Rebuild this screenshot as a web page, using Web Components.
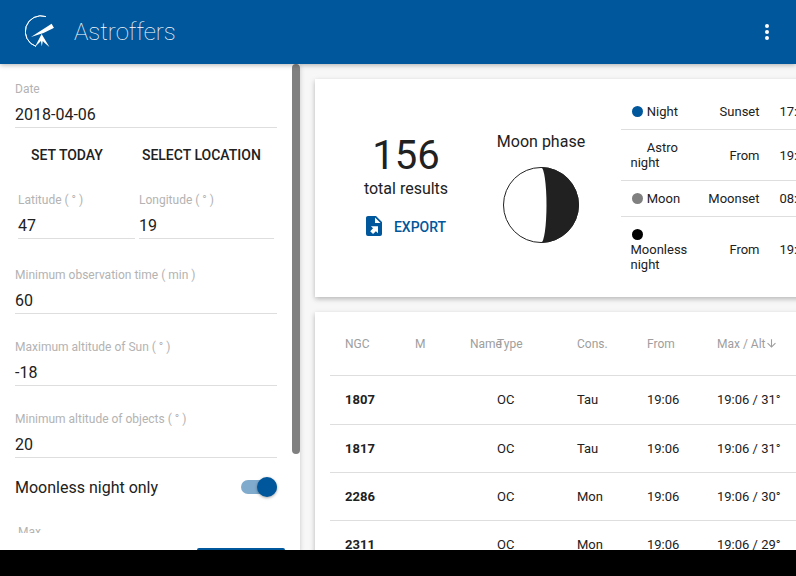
<!DOCTYPE html>
<html lang="en">
<head>
<meta charset="utf-8">
<title>Astroffers</title>
<style>
  html, body { margin: 0; height: 576px; overflow: hidden; background: #000; }
  body { font-family: Roboto, "Liberation Sans", sans-serif; font-size: 16px; color: #212121; }
</style>
</head>
<body>
<astro-app></astro-app>
<script>
const define = (name, html, init) => {
  const template = document.createElement('template');
  template.innerHTML = html;
  customElements.define(name, class extends HTMLElement {
    constructor() {
      super();
      this.attachShadow({ mode: 'open' }).appendChild(template.content.cloneNode(true));
    }
    connectedCallback() { if (init) init(this, this.shadowRoot); }
  });
};

define('astro-header', `
<style>
  :host { display: flex; align-items: center; height: 64px; flex: none; box-sizing: border-box; padding: 0 17px 0 25px;
    background: #01579b; color: #fff; box-shadow: 0 1px 5px rgba(0,0,0,.3); z-index: 2; position: relative; }
  h1 { flex: 1; margin: 0 0 0 17px; font-weight: 100; font-size: 24px; line-height: 32px; }
  svg { display: block; fill: currentColor; }
</style>
<svg width="32" height="34" viewBox="0 0 32 34">
  <path d="M21 1.6A15.6 15.6 0 0 0 11 31.4A15.2 15.2 0 0 1 21 1.6Z" stroke="#fff" stroke-width=".9"/>
  <path d="M6 22L26.6 8.8L28.6 12.3L28.2 13.2L18.5 18Z"/>
  <path d="M16.6 19L24.4 32L19.2 27.6L17.8 26L16.8 31.2L15.9 26L14.5 27.6L9.9 32Z"/>
</svg>
<h1><slot></slot></h1>
<svg width="24" height="24" viewBox="0 0 24 24"><path d="M12 8a2 2 0 1 0 0-4 2 2 0 0 0 0 4zm0 2a2 2 0 1 0 0 4 2 2 0 0 0 0-4zm0 6a2 2 0 1 0 0 4 2 2 0 0 0 0-4z"/></svg>
`);

define('astro-field', `
<style>
  :host { display: block; flex: none; }
  .label { font-size: 12px; line-height: 16px; color: #b3b3b3; white-space: nowrap; }
  .value { margin-top: 6px; line-height: 24px; border-bottom: 1px solid #dedede; }
</style>
<div class="label"></div><div class="value"><slot></slot></div>
`, (host, root) => { root.querySelector('.label').textContent = host.getAttribute('label'); });

define('astro-button', `
<style>
  :host { display: flex; align-items: center; font-size: 14px; font-weight: 500; line-height: 36px; white-space: nowrap; }
</style>
<slot></slot>
`);

define('astro-switch', `
<style>
  :host { display: flex; align-items: center; justify-content: space-between; height: 24px; line-height: 24px; }
  .text { padding-top: 2px; }
  .track { display: flex; align-items: center; justify-content: flex-end; width: 36px; height: 14px; border-radius: 7px; background: #80abcd; }
  .knob { width: 20px; height: 20px; border-radius: 50%; background: #01579b; box-shadow: 0 1px 3px rgba(0,0,0,.35); }
</style>
<div class="text"><slot></slot></div><div class="track"><div class="knob"></div></div>
`);

define('astro-sidebar', `
<style>
  :host { display: flex; flex-direction: column; width: 300px; height: 486px; flex: none; background: #fff; box-shadow: 0 2px 5px rgba(0,0,0,.2); z-index: 1; }
  .main { display: flex; flex: 1; min-height: 0; }
  .scroll { display: flex; flex-direction: column; width: 262px; height: 469px; padding: 0 15px; overflow: hidden; }
  .bar { width: 8px; height: 390px; border-radius: 4px; background: #808080; }
  .buttons { display: flex; gap: 39px; height: 36px; margin: 9px 0 19px 16px; }
  .pair { display: flex; gap: 4px; margin: 0 3px 28px; }
  .pair astro-field:first-child { width: 117px; }
  .pair astro-field:last-child { width: 135px; }
  .gap { margin-bottom: 25px; }
  astro-switch { margin-top: 17px; flex: none; }
  .cut { margin: 25px 3px 0; }
  .footer { display: flex; justify-content: flex-end; height: 2px; padding-right: 15px; overflow: hidden; }
  .footer div { width: 88px; height: 36px; border-radius: 2px; background: #01579b; }
</style>
<div class="main">
  <div class="scroll">
    <astro-field label="Date" style="margin-top:17px">2018-04-06</astro-field>
    <div class="buttons"><astro-button>SET TODAY</astro-button><astro-button>SELECT LOCATION</astro-button></div>
    <div class="pair"><astro-field label="Latitude ( ° )">47</astro-field><astro-field label="Longitude ( ° )">19</astro-field></div>
    <astro-field class="gap" label="Minimum observation time ( min )">60</astro-field>
    <astro-field class="gap" label="Maximum altitude of Sun ( ° )">-18</astro-field>
    <astro-field label="Minimum altitude of objects ( ° )">20</astro-field>
    <astro-switch>Moonless night only</astro-switch>
    <astro-field class="cut" label="Max"></astro-field>
  </div>
  <div class="bar"></div>
</div>
<div class="footer"><div></div></div>
`);

define('astro-card', `
<style>
  :host { display: block; flex: none; box-sizing: border-box; padding: 15px; background: #fff;
    box-shadow: 0 2px 5px rgba(0,0,0,.26); }
</style>
<slot></slot>
`);

define('astro-moon', `
<style>
  :host { display: flex; flex-direction: column; align-items: center; line-height: 24px; }
  svg { display: block; margin-top: 11.5px; }
</style>
<div>Moon phase</div>
<svg width="78" height="78" viewBox="0 0 78 78">
  <circle cx="39" cy="39" r="37.5" fill="#fff" stroke="#212121"/>
  <path d="M39 1A38 38 0 0 1 39 77A5.5 38 0 0 0 39 1Z" fill="#212121"/>
</svg>
`);

define('astro-period', `
<style>
  :host { display: grid; grid-template-columns: 56px 52px 100px; column-gap: 20px; align-items: center; padding: 10px;
    font-size: 13px; line-height: 15px; border-bottom: 1px solid #dedede; }
  :host(:last-child) { border-bottom: 0; }
  i { display: inline-block; width: 11px; height: 11px; border-radius: 50%; background: var(--dot, transparent); margin: 0 1px 0 1px; vertical-align: -1px; }
  .kind { text-align: right; margin-right: -.5px; }
  .time { margin-left: .5px; }
  .name { margin: 0 -4px 0 -.5px; }
</style>
<div class="name"><i></i> <slot></slot></div><div class="kind"></div><div class="time"></div>
`, (host, root) => {
  root.querySelector('.kind').textContent = host.getAttribute('kind');
  root.querySelector('.time').textContent = host.getAttribute('time');
});

define('astro-summary', `
<style>
  :host { display: grid; grid-template-columns: 152px 118px 1fr; height: 188px; align-items: start; }
  .results { display: flex; flex-direction: column; align-items: center; padding-top: 38px; }
  .count { font-size: 40px; line-height: 48px; }
  .total { line-height: 20px; margin-top: -1px; }
  astro-button { color: #01579b; margin: 9px 4px 0 0; gap: 8px; height: 36px; }
  astro-button span { padding-top: 2px; }
  svg { display: block; fill: currentColor; }
  astro-moon { padding-top: 36px; }
  .periods { margin-left: 21px; }
</style>
<div class="results">
  <div class="count">156</div><div class="total">total results</div>
  <astro-button><svg width="24" height="24" viewBox="0 0 24 24"><path d="M6,2C4.89,2 4,2.9 4,4V20A2,2 0 0,0 6,22H18A2,2 0 0,0 20,20V8L14,2M13,3.5L18.5,9H13M8.93,12.22H16V19.29L13.88,17.17L11.05,20L8.22,17.17L11.05,14.35"/></svg><span>EXPORT</span></astro-button>
</div>
<astro-moon></astro-moon>
<div class="periods">
  <astro-period kind="Sunset" time="17:21" style="--dot:#01579b">Night</astro-period>
  <astro-period kind="From" time="19:06">Astro night</astro-period>
  <astro-period kind="Moonset" time="08:30" style="--dot:#808080">Moon</astro-period>
  <astro-period kind="From" time="19:06" style="--dot:#000">Moonless night</astro-period>
</div>
`);

define('astro-row', `
<style>
  :host { display: grid; grid-template-columns: 70px 55px 27px 80px 70px 70px 1fr; align-items: center; box-sizing: border-box; height: 48px;
    padding-left: 15px; font-size: 13px; line-height: 16px; white-space: nowrap; border-bottom: 1px solid #dedede; }
  :host([head]) { height: 64px; font-size: 12px; color: #9e9e9e; }
  :host([first]) { height: 49px; }
  :host(:not([head])) span:first-of-type { font-weight: 700; }
  svg { fill: currentColor; vertical-align: -2px; margin-left: -1px; }
</style>
`, (host, root) => {
  for (const text of host.getAttribute('cells').split('|')) {
    const cell = document.createElement('span');
    cell.textContent = text;
    root.append(cell);
  }
  if (host.hasAttribute('head')) root.lastElementChild.insertAdjacentHTML('beforeend',
    '<svg width="13" height="13" viewBox="0 0 24 24"><path d="M20 12l-1.41-1.41L13 16.17V4h-2v12.17l-5.58-5.59L4 12l8 8 8-8z"/></svg>');
});

define('astro-app', `
<style>
  :host { display: flex; flex-direction: column; width: 796px; height: 550px; overflow: hidden; background: #f7f7f7; }
  .body { display: flex; flex: 1; min-height: 0; }
  main { display: flex; flex-direction: column; gap: 15px; padding: 15px 0 0 15px; width: 560px; flex: none; }
</style>
<astro-header>Astroffers</astro-header>
<div class="body">
  <astro-sidebar></astro-sidebar>
  <main>
    <astro-card style="height:218px"><astro-summary></astro-summary></astro-card>
    <astro-card style="padding-top:0">
      <astro-row head cells="NGC|M|Name|Type|Cons.|From|Max / Alt"></astro-row>
      <astro-row first cells="1807|||OC|Tau|19:06|19:06 / 31°"></astro-row>
      <astro-row cells="1817|||OC|Tau|19:06|19:06 / 31°"></astro-row>
      <astro-row cells="2286|||OC|Mon|19:06|19:06 / 30°"></astro-row>
      <astro-row cells="2311|||OC|Mon|19:06|19:06 / 29°"></astro-row>
    </astro-card>
  </main>
</div>
`);
</script>
</body>
</html>
